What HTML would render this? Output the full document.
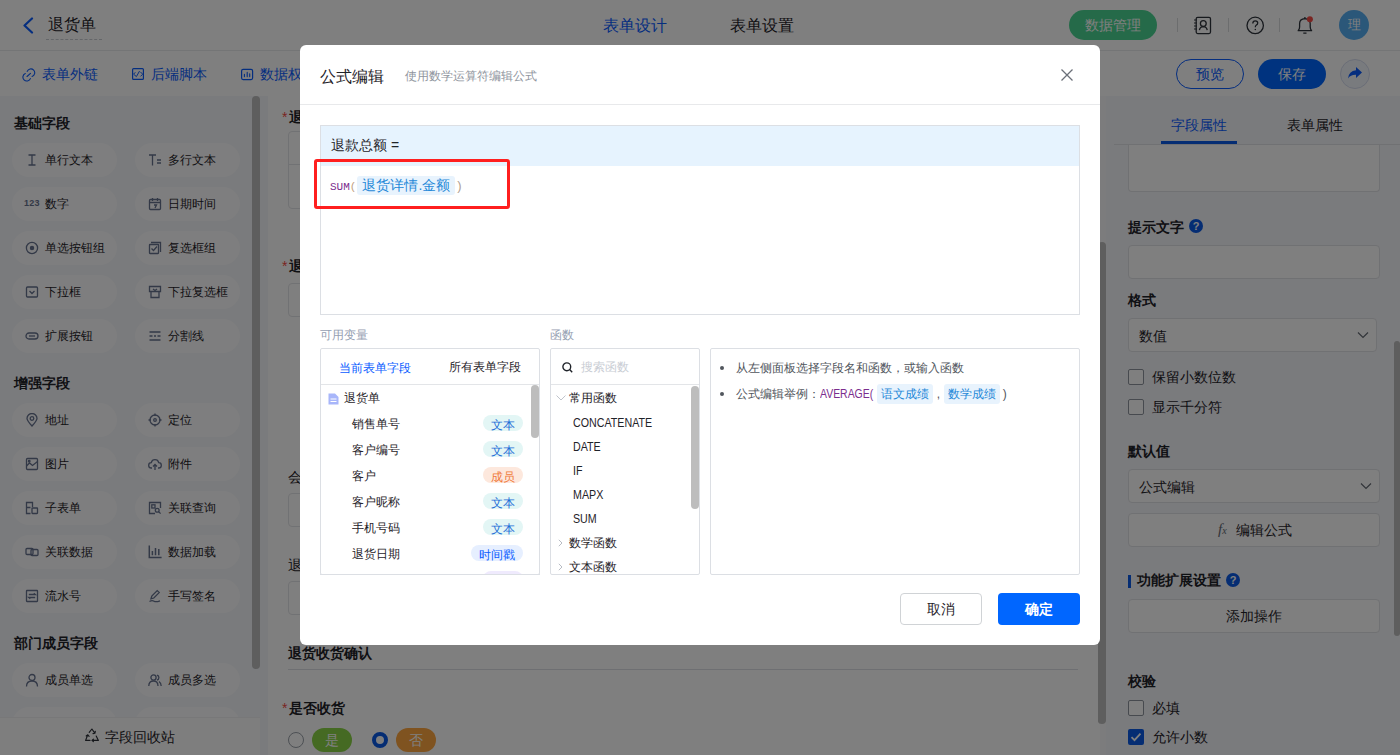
<!DOCTYPE html><html><head><meta charset="utf-8"><style>
*{box-sizing:border-box;margin:0;padding:0}
html,body{width:1400px;height:755px;overflow:hidden;background:#fff;font-family:"Liberation Sans",sans-serif;color:#1f2329}
.a{position:absolute;white-space:nowrap}
.pill{position:absolute;width:105px;height:34px;border-radius:17px;background:#fdfdfe}
.pill .t{position:absolute;left:33px;top:9px;font-size:12px;line-height:16px;color:#1f2329}
.pill svg{position:absolute;left:13px;top:10px}
.sec{position:absolute;left:14px;font-size:14px;font-weight:bold;color:#1f2329;line-height:14px}
.lbl{position:absolute;font-size:14px;line-height:16px;color:#1f2329}
.inp{position:absolute;border:1px solid #e2e4e8;border-radius:4px;background:#fff}
.rlbl{position:absolute;left:28px;font-size:14px;font-weight:bold;line-height:16px;color:#1f2329}
.rinp{position:absolute;left:28px;width:251px;height:34px;border:1px solid #e0e2e6;border-radius:4px;background:#fff}
.cb{position:absolute;left:28px;width:16px;height:16px;border:1px solid #9aa0a8;border-radius:2px;background:#fff}
.cbt{position:absolute;left:52px;font-size:14px;line-height:16px;color:#1f2329}
.row{position:absolute;left:32px;font-size:12px;line-height:14px;color:#1f2329}
.tag{position:absolute;height:16px;border-radius:8px;font-size:12px;line-height:16px;text-align:center}
.fn{position:absolute;left:23px;font-size:12px;line-height:14px;color:#1f2329}
.tok{display:inline-block;background:#e8f3fd;color:#1e88d8;border-radius:3px}
</style></head><body>
<div class="a" style="left:0;top:0;width:1400px;height:51px;background:#fff;border-bottom:1px solid #e9eaec">
<svg class="a" style="left:21px;top:17px" width="14" height="17" viewBox="0 0 14 17"><path d="M11 1.5 L3.5 8.5 L11 15.5" fill="none" stroke="#0a5cff" stroke-width="2.2" stroke-linecap="round" stroke-linejoin="round"/></svg>
<div class="a" style="left:48px;top:14px;font-size:16px;line-height:22px;color:#1f2329">退货单</div>
<div class="a" style="left:46px;top:39px;width:56px;border-top:1px dashed #c9ccd2"></div>
<div class="a" style="left:603px;top:16px;font-size:16px;line-height:20px;color:#0a5cff">表单设计</div>
<div class="a" style="left:730px;top:16px;font-size:16px;line-height:20px;color:#1f2329">表单设置</div>
<div class="a" style="left:1069px;top:10px;width:88px;height:30px;border-radius:15px;background:#4ad592;color:#fff;font-size:14px;line-height:30px;text-align:center">数据管理</div>
<div class="a" style="left:1177px;top:18px;width:1px;height:14px;background:#d8dadd"></div>
<div class="a" style="left:1228px;top:18px;width:1px;height:14px;background:#d8dadd"></div>
<div class="a" style="left:1279px;top:18px;width:1px;height:14px;background:#d8dadd"></div>
<svg class="a" style="left:1190px;top:14px" width="25" height="24" viewBox="1190 14 25 24" fill="none" stroke="#2f343c" stroke-width="1.3"><rect x="1196.2" y="17.3" width="14.3" height="16.3" rx="1.5"/><path d="M1194 20h3M1194 23h3M1194 26h3M1194 29h3" stroke-width="1.1"/><circle cx="1203.3" cy="23.5" r="2.9"/><path d="M1199.4 30.2Q1199.8 26.8 1203.3 26.6Q1206.8 26.8 1207.2 30.2"/></svg>
<svg class="a" style="left:1244px;top:14px" width="24" height="24" viewBox="1244 14 24 24" fill="none" stroke="#2f343c" stroke-width="1.3"><circle cx="1255.2" cy="25.4" r="8.2"/><path d="M1252.8 23.4Q1252.9 20.8 1255.3 20.8Q1257.7 20.8 1257.7 23Q1257.7 24.5 1256.2 25.2Q1255.3 25.7 1255.3 27.2"/><circle cx="1255.3" cy="29.4" r="0.75" fill="#2f343c" stroke="none"/></svg>
<svg class="a" style="left:1294px;top:14px" width="24" height="24" viewBox="1294 14 24 24" fill="none" stroke="#2f343c" stroke-width="1.3" stroke-linejoin="round"><path d="M1298.2 30.7Q1299.6 29.2 1299.6 27V23.5Q1299.6 19 1304.9 18.6Q1310.2 19 1310.2 23.5V27Q1310.2 29.2 1311.6 30.7Z"/><path d="M1303.3 33.2H1306.5M1304.9 17V18.4"/><circle cx="1309.9" cy="19.2" r="3" fill="#f54a45" stroke="none"/></svg>
<div class="a" style="left:1339px;top:10px;width:30px;height:30px;border-radius:15px;background:#56aef2;color:#fff;font-size:13px;line-height:30px;text-align:center">理</div>
</div>
<div class="a" style="left:0;top:51px;width:1400px;height:45px;background:#fff">
<svg class="a" style="left:22px;top:16px" width="14" height="16" viewBox="0 0 14 16"><path d="M5.2 4.4A3.9 3.9 0 1 1 10.1 9.5M3.3 6.5A3.9 3.9 0 1 0 8.4 11.6M5 9.5L8.5 6.3" fill="none" stroke="#0a5cff" stroke-width="1.1" stroke-linecap="round"/></svg>
<div class="a" style="left:42px;top:16px;font-size:14px;line-height:14px;color:#0a5cff">表单外链</div>
<svg class="a" style="left:128px;top:14px" width="20" height="20" viewBox="128 65 20 20" fill="none" stroke="#0a5cff" stroke-width="1.2"><rect x="132.6" y="68.6" width="10.8" height="10.8" rx="1"/><path d="M135.3 72.3L133.6 74.2L136.4 76.6L139.5 71.1M140.3 71.8L142.7 74.2L140.5 76.4" stroke-width="1"/></svg>
<div class="a" style="left:151px;top:16px;font-size:14px;line-height:14px;color:#0a5cff">后端脚本</div>
<svg class="a" style="left:236px;top:14px" width="20" height="20" viewBox="236 65 20 20" fill="none" stroke="#0a5cff" stroke-width="1.2"><rect x="241.6" y="69.4" width="11" height="10.2" rx="1.5"/><path d="M244.4 74.3V76.6M247.2 72.4V76.6M249.7 73.8V76.6" stroke-width="1.1" stroke-linecap="round"/></svg>
<div class="a" style="left:260px;top:16px;font-size:14px;line-height:14px;color:#0a5cff">数据权限</div>
<div class="a" style="left:1176px;top:8px;width:68px;height:30px;border-radius:15px;border:1px solid #0a5cff;color:#0a5cff;font-size:14px;line-height:28px;text-align:center;background:#fff">预览</div>
<div class="a" style="left:1258px;top:8px;width:68px;height:30px;border-radius:15px;background:#0066ff;color:#fff;font-size:14px;line-height:30px;text-align:center">保存</div>
<div class="a" style="left:1340px;top:8px;width:30px;height:30px;border-radius:15px;border:1px solid #d5dcee;background:#f3f6fd"></div>
<svg class="a" style="left:1347px;top:15px" width="16" height="14" viewBox="0 0 16 14"><path d="M9 1 L15 6.5 L9 12 V8.8 Q3.5 8.6 1 12.5 Q1.8 5 9 4.3 Z" fill="#0a5cff"/></svg>
</div>
<div class="a" style="left:0;top:96px;width:268px;height:659px;background:#f4f6fb">
<div class="a" style="left:252px;top:0px;width:8px;height:573px;border-radius:4px;background:#bcbcbc"></div>
<div class="sec" style="top:20px">基础字段</div>
<div class="pill" style="left:12px;top:47px"><svg width="14" height="14" viewBox="0 0 14 14" fill="none" stroke="#66728f" stroke-width="1.3"><path d="M3.5 2h7M3.5 12h7M7 2v10"/></svg><span class="t">单行文本</span></div>
<div class="pill" style="left:135px;top:47px"><svg width="14" height="14" viewBox="0 0 14 14" fill="none" stroke="#66728f" stroke-width="1.3"><path d="M1 2h7M4.5 2v10.5M9 7h4M9 10h4"/></svg><span class="t">多行文本</span></div>
<div class="pill" style="left:12px;top:91px"><span style="position:absolute;left:12px;top:11px;font-size:9px;line-height:11px;font-weight:bold;color:#66728f;letter-spacing:0.2px">123</span><span class="t">数字</span></div>
<div class="pill" style="left:135px;top:91px"><svg width="14" height="14" viewBox="0 0 14 14" fill="none" stroke="#66728f" stroke-width="1.3"><rect x="1.5" y="2.5" width="11" height="10" rx="1"/><path d="M1.5 5.5h11M4.5 1v3M9.5 1v3M6 8h2.5l-1.5 3"/></svg><span class="t">日期时间</span></div>
<div class="pill" style="left:12px;top:135px"><svg width="14" height="14" viewBox="0 0 14 14" fill="none" stroke="#66728f" stroke-width="1.3"><circle cx="7" cy="7" r="5.6"/><circle cx="7" cy="7" r="1.6" fill="#66728f"/></svg><span class="t">单选按钮组</span></div>
<div class="pill" style="left:135px;top:135px"><svg width="14" height="14" viewBox="0 0 14 14" fill="none" stroke="#66728f" stroke-width="1.3"><path d="M3 1.5h9.5v9.5"/><rect x="1.5" y="3.5" width="9" height="9" rx="0.5"/><path d="M3.5 7.5l2 2 3.5-4"/></svg><span class="t">复选框组</span></div>
<div class="pill" style="left:12px;top:179px"><svg width="14" height="14" viewBox="0 0 14 14" fill="none" stroke="#66728f" stroke-width="1.3"><rect x="1.5" y="2" width="11" height="10" rx="1"/><path d="M4.5 6l2.5 2.5 2.5-2.5"/></svg><span class="t">下拉框</span></div>
<div class="pill" style="left:135px;top:179px"><svg width="14" height="14" viewBox="0 0 14 14" fill="none" stroke="#66728f" stroke-width="1.3"><path d="M1.5 1.5h11v5h-11zM3 6.5v6h8v-6"/><path d="M5 4l2 1.5 2-1.5"/></svg><span class="t">下拉复选框</span></div>
<div class="pill" style="left:12px;top:223px"><svg width="14" height="14" viewBox="0 0 14 14" fill="none" stroke="#66728f" stroke-width="1.3"><rect x="1" y="4" width="12" height="6" rx="3"/><path d="M4 7h6"/></svg><span class="t">扩展按钮</span></div>
<div class="pill" style="left:135px;top:223px"><svg width="14" height="14" viewBox="0 0 14 14" fill="none" stroke="#66728f" stroke-width="1.3"><path d="M1.5 3h11M1.5 7h3M6 7h2M9.5 7h3M1.5 11h11"/></svg><span class="t">分割线</span></div>
<div class="sec" style="top:280px">增强字段</div>
<div class="pill" style="left:12px;top:307px"><svg width="14" height="14" viewBox="0 0 14 14" fill="none" stroke="#66728f" stroke-width="1.3"><path d="M7 13Q2 7.5 2 5.5A5 5 0 0 1 12 5.5Q12 7.5 7 13z"/><circle cx="7" cy="5.5" r="1.8"/></svg><span class="t">地址</span></div>
<div class="pill" style="left:135px;top:307px"><svg width="14" height="14" viewBox="0 0 14 14" fill="none" stroke="#66728f" stroke-width="1.3"><circle cx="7" cy="7" r="5"/><circle cx="7" cy="7" r="1.3"/><path d="M7 0.5v2.5M7 11v2.5M0.5 7h2.5M11 7h2.5"/></svg><span class="t">定位</span></div>
<div class="pill" style="left:12px;top:351px"><svg width="14" height="14" viewBox="0 0 14 14" fill="none" stroke="#66728f" stroke-width="1.3"><rect x="1.5" y="1.5" width="11" height="11" rx="1"/><path d="M1.5 9l3-3 3 2.5 5-4"/><circle cx="4.2" cy="4.2" r="0.8"/></svg><span class="t">图片</span></div>
<div class="pill" style="left:135px;top:351px"><svg width="14" height="14" viewBox="0 0 14 14" fill="none" stroke="#66728f" stroke-width="1.3"><path d="M4 11H3.5A2.7 2.7 0 0 1 3.3 5.6 3.8 3.8 0 0 1 10.7 5.6 2.7 2.7 0 0 1 10.5 11H10"/><path d="M7 13V7.5M5 9.5l2-2 2 2"/></svg><span class="t">附件</span></div>
<div class="pill" style="left:12px;top:395px"><svg width="14" height="14" viewBox="0 0 14 14" fill="none" stroke="#66728f" stroke-width="1.3"><path d="M5.5 12.5h-4v-11h6v4.5M1.5 6.5h4"/><rect x="7" y="7" width="5.5" height="5.5" rx="0.5"/></svg><span class="t">子表单</span></div>
<div class="pill" style="left:135px;top:395px"><svg width="14" height="14" viewBox="0 0 14 14" fill="none" stroke="#66728f" stroke-width="1.3"><path d="M12.5 7V1.5h-11v11H7"/><rect x="3.8" y="3.8" width="3.2" height="3.2"/><circle cx="9.2" cy="9.2" r="1.9"/><path d="M10.6 10.6l2 2"/></svg><span class="t">关联查询</span></div>
<div class="pill" style="left:12px;top:439px"><svg width="14" height="14" viewBox="0 0 14 14" fill="none" stroke="#66728f" stroke-width="1.3"><rect x="1" y="3.5" width="7" height="6" rx="1"/><rect x="6" y="4.5" width="7" height="6" rx="1"/></svg><span class="t">关联数据</span></div>
<div class="pill" style="left:135px;top:439px"><svg width="14" height="14" viewBox="0 0 14 14" fill="none" stroke="#66728f" stroke-width="1.3"><path d="M1.3 0.5v12h12.3M4.4 10.3V6M7.5 10.3V3M10.8 10.3V4" stroke-width="1.5"/></svg><span class="t">数据加载</span></div>
<div class="pill" style="left:12px;top:483px"><svg width="14" height="14" viewBox="0 0 14 14" fill="none" stroke="#66728f" stroke-width="1.3"><rect x="1.5" y="1.5" width="11" height="11" rx="0.5"/><path d="M3.8 5.5h6.5l-1.5-1.2M10.2 8.5H3.8l1.5 1.2"/></svg><span class="t">流水号</span></div>
<div class="pill" style="left:135px;top:483px"><svg width="14" height="14" viewBox="0 0 14 14" fill="none" stroke="#66728f" stroke-width="1.3"><path d="M1.5 12.5Q4 11 6 12.2T12 11.8M3 9.8l0.8-2.8 5.4-5.4 2 2-5.4 5.4z"/></svg><span class="t">手写签名</span></div>
<div class="sec" style="top:540px">部门成员字段</div>
<div class="pill" style="left:12px;top:567px"><svg width="14" height="14" viewBox="0 0 14 14" fill="none" stroke="#66728f" stroke-width="1.3"><circle cx="7" cy="4.5" r="3"/><path d="M1.5 13.5Q1.5 8 7 8Q12.5 8 12.5 13.5"/></svg><span class="t">成员单选</span></div>
<div class="pill" style="left:135px;top:567px"><svg width="14" height="14" viewBox="0 0 14 14" fill="none" stroke="#66728f" stroke-width="1.3"><circle cx="5.5" cy="4.5" r="2.6"/><path d="M0.8 13Q0.8 8 5.5 8Q10 8 10 13M9 2a2.6 2.6 0 0 1 0 5M11 8.5Q13.2 10 13.2 13"/></svg><span class="t">成员多选</span></div>
<div class="pill" style="left:12px;top:611px"><span class="t">部门单选</span></div>
<div class="pill" style="left:135px;top:611px"><span class="t">部门多选</span></div>
<div class="a" style="left:0;top:621px;width:260px;height:38px;background:#fdfdfd;border-top:1px solid #f0f1f3">
<svg class="a" style="left:80px;top:4px" width="25" height="26" viewBox="0 0 25 26" fill="none" stroke="#2b2f36" stroke-width="1.15" stroke-linejoin="round" stroke-linecap="round"><g><path d="M9.2 10.4L11.9 7L14.8 11.2M13 11.6L14.9 11.3L15.3 9.4M7.8 12.8L5.6 18.4H10M6.2 14L7.8 12.8L9.1 14.3M12 18.4H18.4L16.2 14M13.4 17.1L12 18.4L13.4 19.7"/></g></svg>
<div class="a" style="left:105px;top:11px;font-size:14px;line-height:16px;color:#1f2329">字段回收站</div>
</div>
</div>
<div class="a" style="left:268px;top:96px;width:832px;height:659px;background:#eef0f4"></div>
<div class="a" style="left:268px;top:96px;width:832px;height:659px;background:#fff"></div>
<div class="a" style="left:1098px;top:242px;width:8px;height:482px;border-radius:4px;background:#bcbcbc"></div>
<div class="a" style="left:282px;top:109px;font-size:14px;line-height:16px;color:#1f2329;font-weight:bold"><span style="color:#f54a45;font-weight:normal;margin-right:2px">*</span>退款总额</div>
<div class="inp" style="left:288px;top:131px;width:790px;height:78px"></div>
<div class="a" style="left:289px;top:164px;width:788px;height:1px;background:#e2e4e8"></div>
<div class="a" style="left:282px;top:258px;font-size:14px;line-height:16px;color:#1f2329;font-weight:bold"><span style="color:#f54a45;font-weight:normal;margin-right:2px">*</span>退款说明</div>
<div class="inp" style="left:288px;top:283px;width:790px;height:34px"></div>
<div class="a" style="left:288px;top:469px;font-size:14px;line-height:16px">会员编号</div>
<div class="inp" style="left:288px;top:493px;width:790px;height:34px"></div>
<div class="a" style="left:288px;top:557px;font-size:14px;line-height:16px">退货地址</div>
<div class="inp" style="left:288px;top:581px;width:790px;height:34px"></div>
<div class="a" style="left:288px;top:645px;font-size:14px;font-weight:bold;line-height:16px">退货收货确认</div>
<div class="a" style="left:288px;top:669px;width:790px;height:1px;background:#dcdfe4"></div>
<div class="a" style="left:282px;top:700px;font-size:14px;line-height:16px;color:#1f2329;font-weight:bold"><span style="color:#f54a45;font-weight:normal;margin-right:2px">*</span>是否收货</div>
<div class="a" style="left:288px;top:732px;width:16px;height:16px;border-radius:8px;border:1px solid #9aa0a8;background:#fff"></div>
<div class="a" style="left:312px;top:728px;width:40px;height:24px;border-radius:12px;background:#8ad446;color:#fff;font-size:14px;line-height:24px;text-align:center">是</div>
<div class="a" style="left:372px;top:732px;width:16px;height:16px;border-radius:8px;border:4px solid #0a5ae6;background:#fff"></div>
<div class="a" style="left:396px;top:728px;width:40px;height:24px;border-radius:12px;background:#ffa640;color:#fff;font-size:14px;line-height:24px;text-align:center">否</div>
<div class="a" style="left:1100px;top:96px;width:6px;height:659px;background:#f9f9fa"></div>
<div class="a" style="left:1106px;top:96px;width:294px;height:659px;background:#f5f6fa"></div>
<div class="a" style="left:1098px;top:242px;width:8px;height:482px;border-radius:4px;background:#bcbcbc"></div>
<div class="a" style="left:1394px;top:341px;width:6px;height:295px;border-radius:3px;background:#bcbcbc"></div>
<div class="a" style="left:1171px;top:117px;font-size:14px;line-height:16px;color:#0a5cff">字段属性</div>
<div class="a" style="left:1287px;top:117px;font-size:14px;line-height:16px;color:#1f2329">表单属性</div>
<div class="a" style="left:1114px;top:144px;width:286px;height:1px;background:#e0e2e6"></div>
<div class="a" style="left:1161px;top:141px;width:76px;height:3px;background:#0a5ae6"></div>
<div class="a" style="left:1128px;top:145px;width:252px;height:47px;border:1px solid #e0e2e6;border-top:none;border-radius:0 0 4px 4px;background:#fff"></div>
<div class="a" style="left:1128px;top:219px;font-size:14px;line-height:16px;color:#1f2329;font-weight:bold">提示文字</div>
<div class="a" style="left:1189px;top:219px;width:14px;height:14px;border-radius:7px;background:#0a5ae6;color:#fff;font-size:11px;line-height:14px;text-align:center;font-weight:bold">?</div>
<div class="a" style="left:1128px;top:245px;width:252px;height:34px;border:1px solid #e0e2e6;border-radius:4px;background:#fff"></div>
<div class="a" style="left:1128px;top:292px;font-size:14px;line-height:16px;color:#1f2329;font-weight:bold">格式</div>
<div class="a" style="left:1128px;top:318px;width:249px;height:34px;border:1px solid #e0e2e6;border-radius:4px;background:#fff"></div>
<div class="a" style="left:1139px;top:328px;font-size:14px;line-height:16px;color:#1f2329">数值</div>
<svg class="a" style="left:1357px;top:331px" width="12" height="8" viewBox="0 0 12 8"><path d="M1 1.5l5 5 5-5" fill="none" stroke="#646a73" stroke-width="1.2"/></svg>
<div class="a" style="left:1128px;top:369px;width:16px;height:16px;border:1px solid #8f959e;border-radius:2px;background:#fff"></div>
<div class="a" style="left:1152px;top:369px;font-size:14px;line-height:16px;color:#1f2329">保留小数位数</div>
<div class="a" style="left:1128px;top:399px;width:16px;height:16px;border:1px solid #8f959e;border-radius:2px;background:#fff"></div>
<div class="a" style="left:1152px;top:399px;font-size:14px;line-height:16px;color:#1f2329">显示千分符</div>
<div class="a" style="left:1128px;top:443px;font-size:14px;line-height:16px;color:#1f2329;font-weight:bold">默认值</div>
<div class="a" style="left:1128px;top:469px;width:252px;height:34px;border:1px solid #e0e2e6;border-radius:4px;background:#fff"></div>
<div class="a" style="left:1139px;top:479px;font-size:14px;line-height:16px;color:#1f2329">公式编辑</div>
<svg class="a" style="left:1360px;top:482px" width="12" height="8" viewBox="0 0 12 8"><path d="M1 1.5l5 5 5-5" fill="none" stroke="#646a73" stroke-width="1.2"/></svg>
<div class="a" style="left:1128px;top:513px;width:252px;height:34px;border:1px solid #e0e2e6;border-radius:4px;background:#fff"></div>
<div class="a" style="left:1218px;top:520px;font-size:15px;line-height:18px;color:#646a73;font-family:'Liberation Serif',serif;font-style:italic">f<span style="font-size:10px">x</span></div>
<div class="a" style="left:1236px;top:522px;font-size:14px;line-height:16px;color:#1f2329">编辑公式</div>
<div class="a" style="left:1128px;top:575px;width:3px;height:13px;background:#0a5ae6"></div>
<div class="a" style="left:1137px;top:572px;font-size:14px;line-height:16px;color:#1f2329;font-weight:bold">功能扩展设置</div>
<div class="a" style="left:1226px;top:573px;width:14px;height:14px;border-radius:7px;background:#0a5ae6;color:#fff;font-size:11px;line-height:14px;text-align:center;font-weight:bold">?</div>
<div class="a" style="left:1128px;top:599px;width:252px;height:34px;border:1px solid #e0e2e6;border-radius:4px;background:#fff;font-size:14px;line-height:32px;text-align:center;color:#1f2329">添加操作</div>
<div class="a" style="left:1128px;top:673px;font-size:14px;line-height:16px;color:#1f2329;font-weight:bold">校验</div>
<div class="a" style="left:1128px;top:700px;width:16px;height:16px;border:1px solid #8f959e;border-radius:2px;background:#fff"></div>
<div class="a" style="left:1152px;top:700px;font-size:14px;line-height:16px;color:#1f2329">必填</div>
<div class="a" style="left:1128px;top:729px;width:16px;height:16px;border-radius:2px;background:#0a5ae6"><svg width="16" height="16" viewBox="0 0 16 16"><path d="M3.5 8.2l3 3 6-6.5" fill="none" stroke="#fff" stroke-width="1.8"/></svg></div>
<div class="a" style="left:1152px;top:729px;font-size:14px;line-height:16px;color:#1f2329">允许小数</div>
<div class="a" style="left:0;top:0;width:1400px;height:755px;background:rgba(0,0,0,.5)"></div>
<div class="a" style="left:300px;top:45px;width:800px;height:600px;background:#fff;border-radius:6px;overflow:hidden">
<div class="a" style="left:20px;top:22px;font-size:16px;line-height:20px;color:#1f2329">公式编辑</div>
<div class="a" style="left:105px;top:23px;font-size:12px;line-height:16px;color:#8f959e">使用数学运算符编辑公式</div>
<svg class="a" style="left:760px;top:23px" width="14" height="14" viewBox="0 0 14 14"><path d="M1.5 1.5l11 11M12.5 1.5l-11 11" stroke="#6b7079" stroke-width="1.3"/></svg>
<div class="a" style="left:0px;top:59px;width:800px;height:1px;background:#e8e9eb"></div>
<div class="a" style="left:20px;top:80px;width:760px;height:190px;border:1px solid #dcdfe4;background:#fff"></div>
<div class="a" style="left:21px;top:81px;width:758px;height:40px;background:#e6f3fe"></div>
<div class="a" style="left:31px;top:92px;font-size:14px;line-height:16px;color:#1f2329">退款总额 =</div>
<div class="a" style="left:30px;top:131px;font-size:11px;line-height:18px;color:#7b2d8e;font-family:'Liberation Mono',monospace">SUM<span style="color:#c0a080">(</span><span class="tok" style="font-family:'Liberation Sans',sans-serif;font-size:14px;line-height:19px;padding:0 5px;margin:0 0 0 1px">退货详情.金额</span><span style="color:#8f959e;font-family:'Liberation Sans',sans-serif;font-size:13px;margin-left:2px;color:#b0a090">)</span></div>
<div class="a" style="left:14px;top:114px;width:196px;height:50px;border:3px solid #ff1f1f;border-radius:3px"></div>
<div class="a" style="left:20px;top:282px;font-size:12px;line-height:16px;color:#95a0b2">可用变量</div>
<div class="a" style="left:250px;top:282px;font-size:12px;line-height:16px;color:#95a0b2">函数</div>
<div class="a" style="left:20px;top:303px;width:220px;height:227px;border:1px solid #dcdfe4;border-radius:2px;background:#fff;overflow:hidden"></div>
<div class="a" style="left:21px;top:339px;width:218px;height:1px;background:#e3e5e8"></div>
<div class="a" style="left:39px;top:316px;font-size:12px;line-height:14px;color:#0a5cff">当前表单字段</div>
<div class="a" style="left:149px;top:315px;font-size:12px;line-height:14px;color:#1f2329">所有表单字段</div>
<svg class="a" style="left:28px;top:348px" width="11" height="12" viewBox="0 0 11 12"><path d="M0.5 0.5h6.5l3.5 3.5v7.5h-10z" fill="#a8b6fa"/><path d="M2.5 6h6M2.5 8.5h6" stroke="#fff" stroke-width="1"/></svg>
<div class="a" style="left:44px;top:346px;font-size:12px;line-height:14px;color:#1f2329">退货单</div>
<div class="a" style="left:52px;top:372px;font-size:12px;line-height:14px;color:#1f2329">销售单号</div>
<div class="a" style="left:183px;top:370px;width:40px;height:16px;border-radius:8px;background:#e3f6f5;color:#1f6fd8;font-size:12px;line-height:20px;text-align:center;overflow:hidden">文本</div>
<div class="a" style="left:52px;top:398px;font-size:12px;line-height:14px;color:#1f2329">客户编号</div>
<div class="a" style="left:183px;top:396px;width:40px;height:16px;border-radius:8px;background:#e3f6f5;color:#1f6fd8;font-size:12px;line-height:20px;text-align:center;overflow:hidden">文本</div>
<div class="a" style="left:52px;top:424px;font-size:12px;line-height:14px;color:#1f2329">客户</div>
<div class="a" style="left:183px;top:422px;width:40px;height:16px;border-radius:8px;background:#fde8dd;color:#f07a3a;font-size:12px;line-height:20px;text-align:center;overflow:hidden">成员</div>
<div class="a" style="left:52px;top:450px;font-size:12px;line-height:14px;color:#1f2329">客户昵称</div>
<div class="a" style="left:183px;top:448px;width:40px;height:16px;border-radius:8px;background:#e3f6f5;color:#1f6fd8;font-size:12px;line-height:20px;text-align:center;overflow:hidden">文本</div>
<div class="a" style="left:52px;top:476px;font-size:12px;line-height:14px;color:#1f2329">手机号码</div>
<div class="a" style="left:183px;top:474px;width:40px;height:16px;border-radius:8px;background:#e3f6f5;color:#1f6fd8;font-size:12px;line-height:20px;text-align:center;overflow:hidden">文本</div>
<div class="a" style="left:52px;top:502px;font-size:12px;line-height:14px;color:#1f2329">退货日期</div>
<div class="a" style="left:171px;top:500px;width:52px;height:16px;border-radius:8px;background:#e6efff;color:#0a5cff;font-size:12px;line-height:20px;text-align:center;overflow:hidden">时间戳</div>
<div class="a" style="left:183px;top:526px;width:40px;height:16px;border-radius:8px;background:#efeafd"></div>
<div class="a" style="left:21px;top:530px;width:218px;height:60px;background:#fff"></div>
<div class="a" style="left:20px;top:529px;width:220px;height:1px;background:#dcdfe4"></div>
<div class="a" style="left:231px;top:340px;width:8px;height:53px;border-radius:4px;background:#bdbdbd"></div>
<div class="a" style="left:250px;top:303px;width:150px;height:227px;border:1px solid #dcdfe4;border-radius:2px;background:#fff"></div>
<div class="a" style="left:251px;top:339px;width:148px;height:1px;background:#e3e5e8"></div>
<svg class="a" style="left:262px;top:317px" width="11" height="11" viewBox="0 0 11 11"><circle cx="4.8" cy="4.8" r="3.9" fill="none" stroke="#1f2329" stroke-width="1.4"/><path d="M7.6 7.6l2.6 2.6" stroke="#1f2329" stroke-width="1.4"/></svg>
<div class="a" style="left:281px;top:315px;font-size:12px;line-height:14px;color:#c9cdd4">搜索函数</div>
<svg class="a" style="left:256px;top:350px" width="10" height="6" viewBox="0 0 10 6"><path d="M0.5 0.5l4.5 4.5 4.5-4.5" fill="none" stroke="#c0c4cc" stroke-width="1"/></svg>
<div class="a" style="left:269px;top:346px;font-size:12px;line-height:14px;color:#1f2329">常用函数</div>
<div class="a" style="left:273px;top:371px;font-size:12px;line-height:14px;color:#1f2329;transform:scaleX(0.89);transform-origin:0 0">CONCATENATE</div>
<div class="a" style="left:273px;top:395px;font-size:12px;line-height:14px;color:#1f2329;transform:scaleX(0.89);transform-origin:0 0">DATE</div>
<div class="a" style="left:273px;top:419px;font-size:12px;line-height:14px;color:#1f2329;transform:scaleX(0.89);transform-origin:0 0">IF</div>
<div class="a" style="left:273px;top:443px;font-size:12px;line-height:14px;color:#1f2329;transform:scaleX(0.89);transform-origin:0 0">MAPX</div>
<div class="a" style="left:273px;top:467px;font-size:12px;line-height:14px;color:#1f2329;transform:scaleX(0.89);transform-origin:0 0">SUM</div>
<svg class="a" style="left:258px;top:494px" width="5" height="8" viewBox="0 0 5 8"><path d="M0.8 0.8L4 4L0.8 7.2" fill="none" stroke="#b8bcc4" stroke-width="1"/></svg>
<div class="a" style="left:269px;top:491px;font-size:12px;line-height:14px;color:#1f2329">数学函数</div>
<svg class="a" style="left:258px;top:518px" width="5" height="8" viewBox="0 0 5 8"><path d="M0.8 0.8L4 4L0.8 7.2" fill="none" stroke="#b8bcc4" stroke-width="1"/></svg>
<div class="a" style="left:269px;top:515px;font-size:12px;line-height:14px;color:#1f2329">文本函数</div>
<div class="a" style="left:391px;top:341px;width:8px;height:123px;border-radius:4px;background:#bdbdbd"></div>
<div class="a" style="left:410px;top:303px;width:370px;height:227px;border:1px solid #dcdfe4;border-radius:2px;background:#fff"></div>
<div class="a" style="left:420px;top:321px;width:4px;height:4px;border-radius:2px;background:#51565d"></div>
<div class="a" style="left:420px;top:347px;width:4px;height:4px;border-radius:2px;background:#51565d"></div>
<div class="a" style="left:436px;top:316px;font-size:12px;line-height:14px;color:#51565d">从左侧面板选择字段名和函数，或输入函数</div>
<div class="a" style="left:436px;top:339px;font-size:12px;line-height:20px;color:#51565d">公式编辑举例：<span style="color:#7b2d8e;display:inline-block;transform:scaleX(.87);transform-origin:0 0;margin-right:-8px">AVERAGE(</span> <span class="tok" style="padding:0 4px;margin-left:1px">语文成绩</span> <span>,</span> <span class="tok" style="padding:0 4px">数学成绩</span> )</div>
<div class="a" style="left:600px;top:548px;width:82px;height:32px;border:1px solid #d0d3d6;border-radius:4px;background:#fff;font-size:14px;line-height:30px;text-align:center;color:#1f2329">取消</div>
<div class="a" style="left:698px;top:548px;width:82px;height:32px;border-radius:4px;background:#0066ff;font-size:14px;line-height:32px;text-align:center;color:#fff;font-weight:bold">确定</div>
</div>
</body></html>
